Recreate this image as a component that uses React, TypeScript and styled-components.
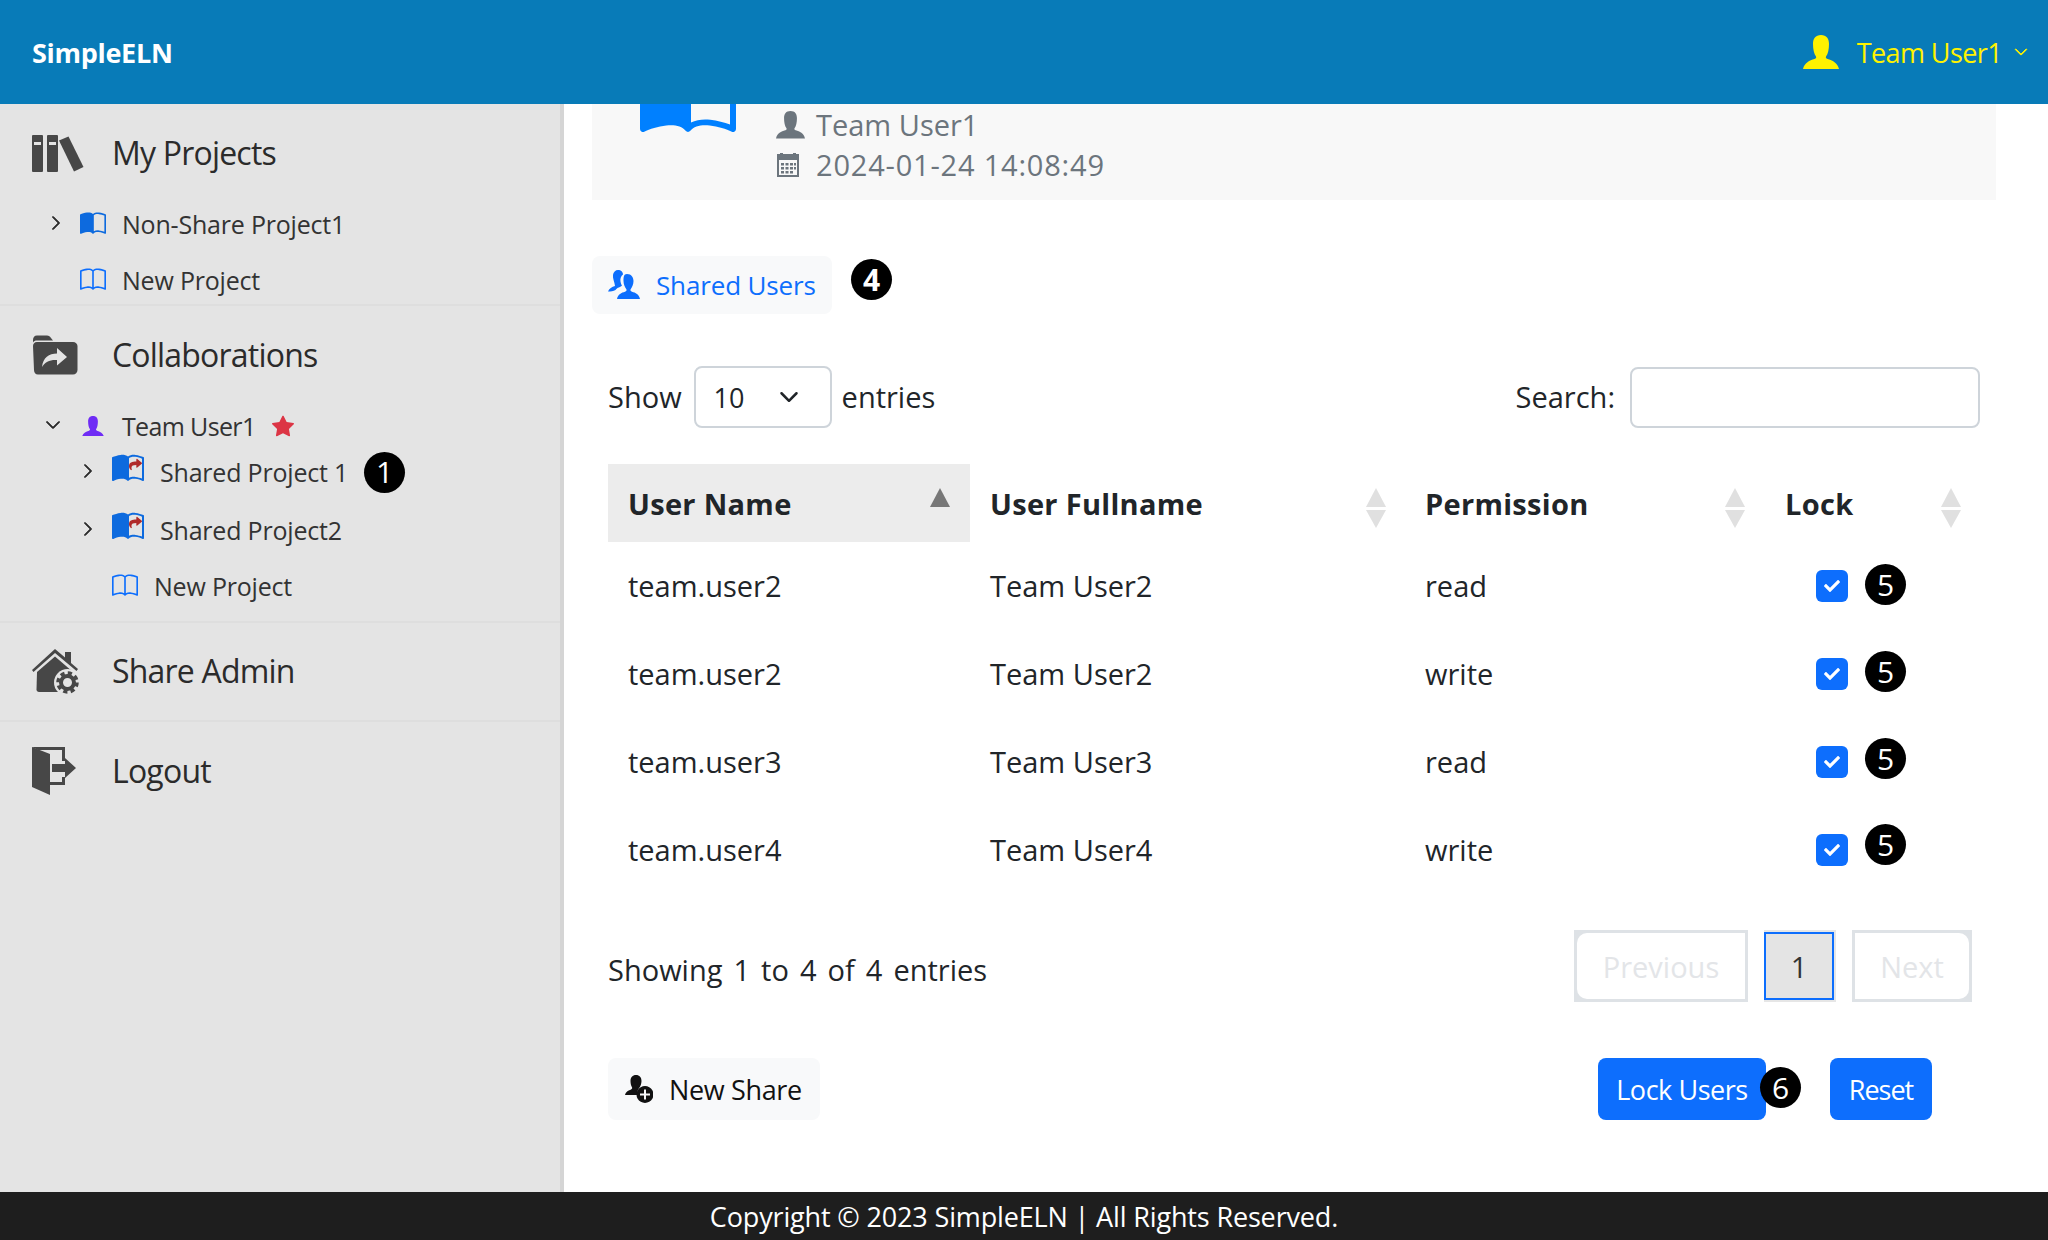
import React from 'react'
import styled, { createGlobalStyle } from 'styled-components'
import { BsBook, BsBookHalf, BsChevronDown, BsChevronRight, BsStarFill } from 'react-icons/bs'
import { FaCheck, FaShare } from 'react-icons/fa'

const GlobalStyle = createGlobalStyle`
  html, body { margin: 0; padding: 0; }
  body {
    font-family: 'Open Sans', 'Noto Sans', sans-serif;
    font-size: 29px;
    color: #212529;
    background: #fff;
  }
  * { box-sizing: border-box; }
`

const AppWrapper = styled.div`
  display: flex;
  flex-direction: column;
  width: 2048px;
  height: 1240px;
  overflow: hidden;
`

const TopBar = styled.header`
  display: flex;
  align-items: center;
  justify-content: space-between;
  height: 104px;
  flex: none;
  padding: 0 20px 0 32px;
  background: #087bb8;
  position: relative;
  z-index: 2;
`

const Brand = styled.div`
  color: #fff;
  font-weight: 700;
  font-size: 27px;
  letter-spacing: -0.3px;
`

const UserMenu = styled.div`
  display: flex;
  align-items: center;
  color: #fff200;
  font-size: 27px;
  letter-spacing: -0.6px;
  svg { flex: none; }
`

const UserName = styled.span`
  margin: 0 12px 0 18px;
`

const Body = styled.div`
  display: flex;
  flex: 1;
  min-height: 0;
`

const Sidebar = styled.aside`
  width: 564px;
  flex: none;
  background: #e4e4e4;
  border-right: 4px solid #d5d5d5;
`

const NavHead = styled.div<{ $h?: number }>`
  display: flex;
  align-items: center;
  height: ${({ $h }) => $h ?? 98}px;
  padding: 0 0 2px 32px;
  font-size: 32px;
  letter-spacing: -0.8px;
  color: #2b2b2b;
`

const NavIcon = styled.span`
  display: flex;
  width: 80px;
  flex: none;
  margin-top: 2px;
`

const TreeRow = styled.div<{ $indent: number; $slot: number; $gap: number; $top?: number }>`
  display: flex;
  align-items: center;
  height: 46px;
  margin-top: ${({ $top }) => $top ?? 0}px;
  padding: 0 0 2px ${({ $indent }) => $indent}px;
  font-size: 25px;
  letter-spacing: -0.2px;
  color: #333;
  & > span:first-child {
    display: flex;
    width: ${({ $slot }) => $slot}px;
    flex: none;
    margin-top: -3px;
  }
  & > svg { margin-right: ${({ $gap }) => $gap}px; flex: none; }
`

const OwnerName = styled.span`
  letter-spacing: -0.65px;
  margin-right: 16px;
`

const Divider = styled.div<{ $top?: number }>`
  height: 2px;
  margin-top: ${({ $top }) => $top ?? 0}px;
  background: #dedede;
`

const SharedBook = styled.span`
  position: relative;
  display: block;
  width: 32px;
  height: 32px;
  margin: -6px 16px 0 0;
  flex: none;
  color: #0d6ade;
  svg:last-child {
    position: absolute;
    right: 2px;
    top: 5px;
    color: #b02a2a;
  }
`

const Mark = styled.span`
  display: inline-flex;
  align-items: center;
  justify-content: center;
  width: 41px;
  height: 41px;
  border-radius: 50%;
  background: #000;
  color: #fff;
  font-size: 30px;
  letter-spacing: 0;
  line-height: 1;
  flex: none;
`

const TreeMark = styled(Mark)`
  margin-left: 16px;
`

const TabMark = styled(Mark)`
  margin-top: 3px;
  font-weight: 700;
`

const FloatMark = styled(Mark)<{ $x: number; $y: number }>`
  position: absolute;
  left: ${({ $x }) => $x}px;
  top: ${({ $y }) => $y}px;
`

const Content = styled.main`
  flex: 1;
  min-width: 0;
  padding: 0 52px 0 28px;
`

const InfoCard = styled.section`
  display: flex;
  height: 96px;
  overflow: hidden;
  background: #f8f8f8;
  color: #6c757d;
  padding-left: 48px;
`

const BigBook = styled.div`
  flex: none;
  margin-top: -56px;
  width: 136px;
  color: #0080ff;
`

const InfoLines = styled.div`
  display: flex;
  flex-direction: column;
  line-height: 40px;
  padding-top: 1px;
`

const InfoLine = styled.div`
  display: flex;
  align-items: center;
`

const InfoGlyph = styled.span`
  display: flex;
  width: 40px;
  flex: none;
`

const InfoDate = styled.span`
  letter-spacing: 0.8px;
`

const TabRow = styled.div`
  display: flex;
  align-items: flex-start;
  gap: 19px;
  margin-top: 56px;
`

const TabButton = styled.button`
  display: flex;
  align-items: center;
  gap: 16px;
  width: 240px;
  height: 58px;
  padding: 0 16px;
  border: 0;
  border-radius: 8px;
  background: #f8f9fa;
  color: #0d6efd;
  font: inherit;
  font-size: 26px;
  letter-spacing: -0.15px;
  white-space: nowrap;
`

const TableArea = styled.div`
  padding: 0 16px;
`

const Controls = styled.div`
  display: flex;
  align-items: center;
  justify-content: space-between;
  margin-top: 52px;
  height: 62px;
`

const LengthPicker = styled.label`
  display: flex;
  align-items: center;
  gap: 10px;
`

const ControlText = styled.span`
  margin-bottom: 2px;
`

const SelectBox = styled.div`
  display: flex;
  align-items: center;
  justify-content: space-between;
  width: 138px;
  height: 62px;
  margin-left: 2px;
  padding: 0 31px 0 18px;
  border: 2px solid #ced4da;
  border-radius: 8px;
  font-size: 27px;
`

const SearchLabel = styled.label`
  display: flex;
  align-items: center;
  gap: 15px;
`

const SearchInput = styled.input`
  width: 350px;
  height: 61px;
  border: 2px solid #ced4da;
  border-radius: 8px;
  background: #fff;
`

const Table = styled.table`
  width: 1372px;
  margin-top: 36px;
  table-layout: fixed;
  border-collapse: collapse;
`

const HeadCell = styled.th<{ $w: number; $sorted?: boolean }>`
  position: relative;
  width: ${({ $w }) => $w}px;
  height: 78px;
  padding: 0 20px;
  text-align: left;
  font-weight: 700;
  letter-spacing: 0.3px;
  background: ${({ $sorted }) => ($sorted ? '#ececec' : 'transparent')};
`

const SortUp = styled.i<{ $right: number; $color: string }>`
  position: absolute;
  right: ${({ $right }) => $right}px;
  top: 24px;
  width: 0;
  height: 0;
  border-left: 10px solid transparent;
  border-right: 10px solid transparent;
  border-bottom: 19px solid ${({ $color }) => $color};
`

const SortDown = styled.i<{ $right: number }>`
  position: absolute;
  right: ${({ $right }) => $right}px;
  top: 46px;
  width: 0;
  height: 0;
  border-left: 10px solid transparent;
  border-right: 10px solid transparent;
  border-top: 18px solid #e0e0e0;
`

const Cell = styled.td`
  height: 88px;
  padding: 0 20px 1px;
`

const LockCell = styled(Cell)`
  position: relative;
  padding-left: 51px;
`

const CheckBox = styled.span`
  display: flex;
  align-items: center;
  justify-content: center;
  width: 32px;
  height: 32px;
  border-radius: 6px;
  background: #0d6efd;
  color: #fff;
`

const CellMark = styled(Mark)<{ $y: number }>`
  position: absolute;
  left: 100px;
  top: ${({ $y }) => $y}px;
`

const Summary = styled.div`
  display: flex;
  align-items: center;
  justify-content: space-between;
  margin-top: 36px;
  height: 72px;
`

const SummaryText = styled.span`
  margin-top: 6px;
  word-spacing: 3.5px;
`

const Pager = styled.div`
  display: flex;
  gap: 16px;
  margin-right: 8px;
`

const PageButton = styled.span<{ $w: number }>`
  display: flex;
  width: ${({ $w }) => $w}px;
  height: 72px;
  padding: 3px;
  background: #dee2e6;
`

const PageLabel = styled.span<{ $round: string }>`
  display: flex;
  flex: 1;
  align-items: center;
  justify-content: center;
  background: #fff;
  border-radius: ${({ $round }) => $round};
  color: #e3e5e8;
`

const PageCurrent = styled.span`
  display: flex;
  align-items: center;
  justify-content: center;
  width: 72px;
  height: 72px;
  border: 2px solid #e6e6e6;
  border-left: 0;
  background: #e4e4e4;
  box-shadow: inset 0 0 0 2px #0d6efd;
  color: #333;
`

const Actions = styled.div`
  position: relative;
  display: flex;
  align-items: center;
  justify-content: space-between;
  margin-top: 56px;
`

const GhostButton = styled.button`
  display: flex;
  align-items: center;
  gap: 16px;
  width: 212px;
  height: 62px;
  padding: 0 17px;
  border: 0;
  border-radius: 8px;
  background: #f8f9fa;
  color: #111;
  font: inherit;
  font-size: 27px;
  letter-spacing: -0.35px;
  white-space: nowrap;
`

const ActionRight = styled.div`
  display: flex;
  gap: 64px;
  margin-right: 48px;
`

const PrimaryButton = styled.button<{ $w: number; $ls: number }>`
  width: ${({ $w }) => $w}px;
  height: 62px;
  padding: 0;
  border: 0;
  border-radius: 8px;
  background: #0d6efd;
  color: #fff;
  font: inherit;
  font-size: 27px;
  letter-spacing: ${({ $ls }) => $ls}px;
`

const Footer = styled.footer`
  display: flex;
  align-items: center;
  justify-content: center;
  height: 48px;
  flex: none;
  background: #1e1e1e;
  color: #fff;
  font-size: 27px;
  letter-spacing: -0.15px;
`

function BooksIcon() {
  return (
    <svg width="52" height="37" viewBox="0 0 52 37" fill="#474747">
      <path fillRule="evenodd" d="M0 1a1 1 0 0 1 1-1h9a1 1 0 0 1 1 1v35a1 1 0 0 1-1 1H1a1 1 0 0 1-1-1zM2 7v3h7V7z" />
      <path fillRule="evenodd" d="M15 1a1 1 0 0 1 1-1h9a1 1 0 0 1 1 1v35a1 1 0 0 1-1 1h-9a1 1 0 0 1-1-1zM17 7v3h7V7z" />
      <path d="M27 5.500 36.500 1.500 51.500 32 42 36.500z" />
    </svg>
  )
}

function FolderShareIcon() {
  return (
    <svg width="46" height="40" viewBox="0 0 46 40" fill="#474747">
      <path d="M1 5c0-2.500 1.500-4.500 4-4.500h10c2 0 3 1 4 2.500l2 2.500h-16c-2 0-3 .5-4 2z" />
      <path fillRule="evenodd" d="M1 11c0-2 1.500-4 4-4h36c2.500 0 4.500 2 4.500 4v24c0 2.500-2 4.500-4.500 4.500H6c-2.500 0-4-2-4-4.500zM25 13v5.500c-8 0-14 4-15 13.500 3-5 8-7.500 15-7v5.500l10-8.500z" />
    </svg>
  )
}

function HouseGearIcon() {
  return (
    <svg width="48" height="45" viewBox="0 0 48 45" fill="#474747">
      <path d="M23 0 33 8.500V3h6v11l7 6-1.500 2L23 4 1.500 23 0 21z" />
      <path d="M5 23 23 7.500 41 23v20H7c-1.500 0-2.500-1-2.500-2.500z" />
      <circle cx="35.500" cy="33.500" r="13.500" fill="#e4e4e4" />
      <circle cx="35.500" cy="33.500" r="6.500" fill="none" stroke="#474747" strokeWidth="4" />
      <circle cx="35.500" cy="33.500" r="9.500" fill="none" stroke="#474747" strokeWidth="3.500" strokeDasharray="4.200 3.260" />
    </svg>
  )
}

function DoorIcon() {
  return (
    <svg width="46" height="48" viewBox="0 0 46 48" fill="#474747">
      <path d="M0 0 18 7V48L0 40z" />
      <path d="M0 0H33V14H30V3H6z" />
      <path d="M18 35H30V30H33V38H18z" />
      <path d="M20 17H33V11L44 21 33 31V25H20z" />
    </svg>
  )
}

function PersonIcon({ size, color }: { size: number; color: string }) {
  return (
    <svg width={size} height={(size * 34) / 36} viewBox="0 1 36 34" fill={color}>
      <path d="M18 1c5.500 0 8 3.500 8 9 0 5-1 10-3 12.500-.5 1 0 2 1.500 2.500 5 1.500 10 3.500 11.500 10H0c1.500-6.500 6.500-8.500 11.500-10 1.500-.5 2-1.500 1.500-2.500C11 20 10 15 10 10 10 4.500 12.500 1 18 1z" />
    </svg>
  )
}

function CalendarIcon() {
  return (
    <svg width="24" height="24" viewBox="0 0 22 24" fill="#6c757d">
      <path fillRule="evenodd" d="M0 1h3V0h3v1h10V0h3v1h3v23H0zM2 7v15h18V7zM4 10h3v2.500H4zM8.500 10h3v2.500h-3zM13 10h3v2.500h-3zM17 10h2v2.500h-2zM4 14h3v2.500H4zM8.500 14h3v2.500h-3zM13 14h3v2.500h-3zM17 14h2v2.500h-2zM4 18h3v2.500H4zM8.500 18h3v2.500h-3zM13 18h3v2.500h-3z" />
    </svg>
  )
}

function SharedUsersIcon() {
  return (
    <svg width="32" height="32" viewBox="0 0 32 32" fill="#0d6efd">
      <path d="M10 1c3 0 5 2 5 4.500-2 1.500-3 4-2.500 7 .2 1.500.8 3 1.500 4-1 1.500-5 2-6.500 4.500-2 1-5 1.500-7.500 1.500 1-3 4-4.500 7-5.500C6.500 13 4.500 9 5 6c.3-3 2.500-5 5-5z" />
      <path d="M19 5c4.500 0 6.500 3.500 6.500 7 0 3.500-1.500 6.500-3 8.500-.3 1 .2 1.800 1.500 2.200 3.500 1 7 2.300 8 7.300H9c1-5 4.500-6.300 8-7.300 1.300-.4 1.800-1.200 1.500-2.200-1.500-2-3-5-3-8.500C15.500 8.500 15.500 5 19 5z" />
    </svg>
  )
}

function NewShareIcon() {
  return (
    <svg width="28" height="28" viewBox="0 0 28 28" fill="#111">
      <path d="M11 0c3.500 0 5.500 2.500 5.500 6 0 2.500-1 5-2 6.500-1.500 2-2.500 4-2.500 7.500H0c1-3.500 3.500-4.500 6-5.500 1-.4 1.500-1.200 1-2.200C6 11 5.500 8.500 5.500 6 5.500 2.500 7.500 0 11 0z" />
      <path fillRule="evenodd" d="M20 11a8.500 8.500 0 1 1-.01 0zM19 14.500v4h-4v2h4v4h2v-4h4v-2h-4v-4z" />
    </svg>
  )
}

const rows = [
  { name: 'team.user2', full: 'Team User2', perm: 'read', mark: 22 },
  { name: 'team.user2', full: 'Team User2', perm: 'write', mark: 21 },
  { name: 'team.user3', full: 'Team User3', perm: 'read', mark: 20 },
  { name: 'team.user4', full: 'Team User4', perm: 'write', mark: 18 },
]

export default function App() {
  return (
    <AppWrapper>
      <GlobalStyle />
      <TopBar>
        <Brand>SimpleELN</Brand>
        <UserMenu>
          <PersonIcon size={36} color="#fff200" />
          <UserName>Team User1</UserName>
          <BsChevronDown size={14} strokeWidth={1} />
        </UserMenu>
      </TopBar>
      <Body>
        <Sidebar>
          <NavHead>
            <NavIcon><BooksIcon /></NavIcon>My Projects
          </NavHead>
          <TreeRow $indent={48} $slot={32} $gap={16}>
            <span><BsChevronRight size={16} strokeWidth={1} color="#222" /></span>
            <BsBookHalf size={26} color="#0d6ade" />Non-Share Project1
          </TreeRow>
          <TreeRow $indent={48} $slot={32} $gap={16} $top={10}>
            <span />
            <BsBook size={26} color="#0d6efd" />New Project
          </TreeRow>
          <Divider />
          <NavHead>
            <NavIcon><FolderShareIcon /></NavIcon>Collaborations
          </NavHead>
          <TreeRow $indent={45} $slot={37} $gap={18}>
            <span><BsChevronDown size={16} strokeWidth={1} color="#222" /></span>
            <PersonIcon size={22} color="#6f2cf5" />
            <OwnerName>Team User1</OwnerName>
            <BsStarFill size={22} color="#dc3545" />
          </TreeRow>
          <TreeRow $indent={80} $slot={32} $gap={16}>
            <span><BsChevronRight size={16} strokeWidth={1} color="#222" /></span>
            <SharedBook>
              <BsBookHalf size={32} />
              <FaShare size={13} />
            </SharedBook>
            Shared Project 1
            <TreeMark>1</TreeMark>
          </TreeRow>
          <TreeRow $indent={80} $slot={32} $gap={16} $top={12}>
            <span><BsChevronRight size={16} strokeWidth={1} color="#222" /></span>
            <SharedBook>
              <BsBookHalf size={32} />
              <FaShare size={13} />
            </SharedBook>
            Shared Project2
          </TreeRow>
          <TreeRow $indent={80} $slot={32} $gap={16} $top={10}>
            <span />
            <BsBook size={26} color="#0d6efd" />New Project
          </TreeRow>
          <Divider $top={11} />
          <NavHead $h={97}>
            <NavIcon><HouseGearIcon /></NavIcon>Share Admin
          </NavHead>
          <Divider />
          <NavHead>
            <NavIcon><DoorIcon /></NavIcon>Logout
          </NavHead>
        </Sidebar>
        <Content>
          <InfoCard>
            <BigBook><BsBookHalf size={96} /></BigBook>
            <InfoLines>
              <InfoLine>
                <InfoGlyph><PersonIcon size={29} color="#6c757d" /></InfoGlyph>
                Team User1
              </InfoLine>
              <InfoLine>
                <InfoGlyph><CalendarIcon /></InfoGlyph>
                <InfoDate>2024-01-24 14:08:49</InfoDate>
              </InfoLine>
            </InfoLines>
          </InfoCard>
          <TabRow>
            <TabButton><SharedUsersIcon />Shared Users</TabButton>
            <TabMark>4</TabMark>
          </TabRow>
          <TableArea>
            <Controls>
              <LengthPicker>
                <ControlText>Show</ControlText>
                <SelectBox>10<BsChevronDown size={20} strokeWidth={1} /></SelectBox>
                <ControlText>entries</ControlText>
              </LengthPicker>
              <SearchLabel>
                <ControlText>Search:</ControlText>
                <SearchInput type="search" />
              </SearchLabel>
            </Controls>
            <Table>
              <thead>
                <tr>
                  <HeadCell $w={362} $sorted>
                    User Name
                    <SortUp $right={20} $color="#777" />
                  </HeadCell>
                  <HeadCell $w={435}>
                    User Fullname
                    <SortUp $right={19} $color="#e0e0e0" /><SortDown $right={19} />
                  </HeadCell>
                  <HeadCell $w={360}>
                    Permission
                    <SortUp $right={20} $color="#e0e0e0" /><SortDown $right={20} />
                  </HeadCell>
                  <HeadCell $w={215}>
                    Lock
                    <SortUp $right={19} $color="#e0e0e0" /><SortDown $right={19} />
                  </HeadCell>
                </tr>
              </thead>
              <tbody>
                {rows.map((r, i) => (
                  <tr key={i}>
                    <Cell>{r.name}</Cell>
                    <Cell>{r.full}</Cell>
                    <Cell>{r.perm}</Cell>
                    <LockCell>
                      <CheckBox><FaCheck size={16} /></CheckBox>
                      <CellMark $y={r.mark}>5</CellMark>
                    </LockCell>
                  </tr>
                ))}
              </tbody>
            </Table>
            <Summary>
              <SummaryText>Showing 1 to 4 of 4 entries</SummaryText>
              <Pager>
                <PageButton $w={174}><PageLabel $round="10px 0 0 10px">Previous</PageLabel></PageButton>
                <PageCurrent>1</PageCurrent>
                <PageButton $w={120}><PageLabel $round="0 10px 10px 0">Next</PageLabel></PageButton>
              </Pager>
            </Summary>
            <Actions>
              <GhostButton><NewShareIcon />New Share</GhostButton>
              <ActionRight>
                <PrimaryButton $w={168} $ls={-0.45}>Lock Users</PrimaryButton>
                <PrimaryButton $w={102} $ls={-1}>Reset</PrimaryButton>
              </ActionRight>
              <FloatMark $x={1152} $y={9}>6</FloatMark>
            </Actions>
          </TableArea>
        </Content>
      </Body>
      <Footer>Copyright © 2023 SimpleELN | All Rights Reserved.</Footer>
    </AppWrapper>
  )
}
